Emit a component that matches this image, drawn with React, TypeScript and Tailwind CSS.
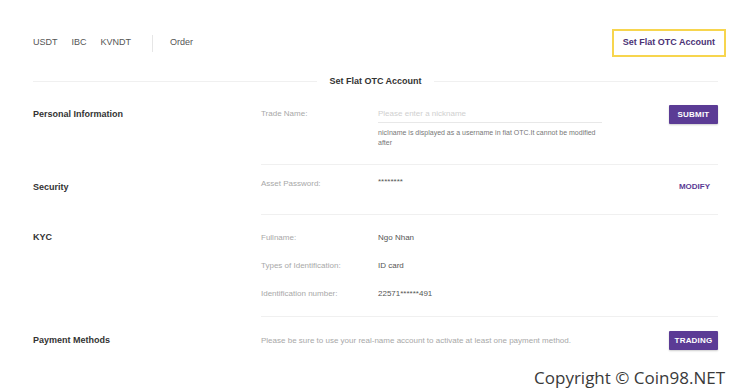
// Set Flat OTC Account — account settings page

const navItems = ['USDT', 'IBC', 'KVNDT'];

function Heading({ children, className = '' }: { children: React.ReactNode; className?: string }) {
  return (
    <div className={`w-[228px] shrink-0 ${className}`}>
      <div className="h-[18px] leading-[18px] text-[9px] font-bold text-[#333]">{children}</div>
    </div>
  );
}

function Label({ children }: { children: React.ReactNode }) {
  return <div className="w-[117px] shrink-0 h-[18px] leading-[18px] text-[8px] text-[#a8a8a8]">{children}</div>;
}

function Value({ children }: { children: React.ReactNode }) {
  return <div className="h-[18px] leading-[18px] text-[8px] text-[#555]">{children}</div>;
}

function PurpleButton({ children }: { children: React.ReactNode }) {
  return (
    <button className="h-[19px] w-[49px] bg-[#5b3b95] text-white text-[8px] font-bold tracking-[0.2px] rounded-[1px] shadow-[0_1px_2px_rgba(0,0,0,0.2)]">
      {children}
    </button>
  );
}

export default function App() {
  return (
    <div
      className="relative w-[735px] h-[391px] bg-white overflow-hidden"
      style={{ fontFamily: '"Liberation Sans", Arial, sans-serif' }}
    >
      <div className="pl-[33px] pr-[17px]">
        {/* top nav */}
        <div className="mt-[29px] h-[28px] flex items-center justify-between">
          <div className="flex items-center text-[9px] text-[#555]">
            {navItems.map(item => (
              <span key={item} className="mr-[14px]">{item}</span>
            ))}
            <span className="w-px h-[17px] bg-[#e6e6e6] ml-[7px] mr-[17px]" />
            <span>Order</span>
          </div>
          <div className="-mr-[8px] h-[28px] px-[9px] flex items-center border-2 border-[#f7d54e] text-[9px] font-bold text-[#4b3275]">
            Set Flat OTC Account
          </div>
        </div>

        {/* title */}
        <div className="mt-[17px] flex items-center">
          <div className="flex-1 h-px bg-[#f0f0f0]" />
          <div className="px-[12px] text-[9px] leading-[14px] font-bold text-[#333]">Set Flat OTC Account</div>
          <div className="flex-1 h-px bg-[#f0f0f0]" />
        </div>

        {/* personal information */}
        <div className="mt-[13px] flex">
          <Heading className="pt-[4px]">Personal Information</Heading>
          <div className="flex-1 flex pt-[4px] pb-[16px] border-b border-[#f0f0f0]">
            <Label>Trade Name:</Label>
            <div className="w-[224px]">
              <div className="h-[18px] flex items-center border-b border-[#e8e8e8] text-[8px] text-[#d0d0d0]">
                Please enter a nickname
              </div>
              <p className="mt-[5px] text-[7px] leading-[10px] text-[#777]">
                nicIname is displayed as a username in fiat OTC.It cannot be modified after
              </p>
            </div>
            <div className="flex-1 flex justify-end">
              <PurpleButton>SUBMIT</PurpleButton>
            </div>
          </div>
        </div>

        {/* security */}
        <div className="flex">
          <Heading className="pt-[13px]">Security</Heading>
          <div className="flex-1 flex pt-[10px] pb-[18px] border-b border-[#f0f0f0]">
            <Label>Asset Password:</Label>
            <div className="w-[224px] h-[18px] leading-[14px] text-[8px] text-[#555]">********</div>
            <div className="flex-1 flex justify-end pt-[3px]">
              <span className="h-[18px] leading-[18px] pr-[8px] text-[8px] font-bold text-[#5b3b95]">MODIFY</span>
            </div>
          </div>
        </div>

        {/* kyc */}
        <div className="flex">
          <Heading className="pt-[13px]">KYC</Heading>
          <div className="flex-1 flex flex-col gap-[10px] pt-[14px] pb-[13px] border-b border-[#f0f0f0]">
            <div className="flex">
              <Label>Fullname:</Label>
              <Value>Ngo Nhan</Value>
            </div>
            <div className="flex">
              <Label>Types of Identification:</Label>
              <Value>ID card</Value>
            </div>
            <div className="flex">
              <Label>Identification number:</Label>
              <Value>22571******491</Value>
            </div>
          </div>
        </div>

        {/* payment methods */}
        <div className="flex">
          <Heading className="pt-[14px]">Payment Methods</Heading>
          <div className="flex-1 flex items-center pt-[14px]">
            <div className="flex-1 h-[18px] leading-[18px] text-[8px] text-[#a8a8a8]">
              Please be sure to use your real-name account to activate at least one payment method.
            </div>
            <PurpleButton>TRADING</PurpleButton>
          </div>
        </div>
      </div>

      {/* watermark */}
      <div
        className="absolute right-[10px] bottom-[1px] text-[17px] text-[#3a3a3a]"
        style={{ fontFamily: '"Open Sans", "Noto Sans", sans-serif' }}
      >
        Copyright © Coin98.NET
      </div>
    </div>
  );
}
